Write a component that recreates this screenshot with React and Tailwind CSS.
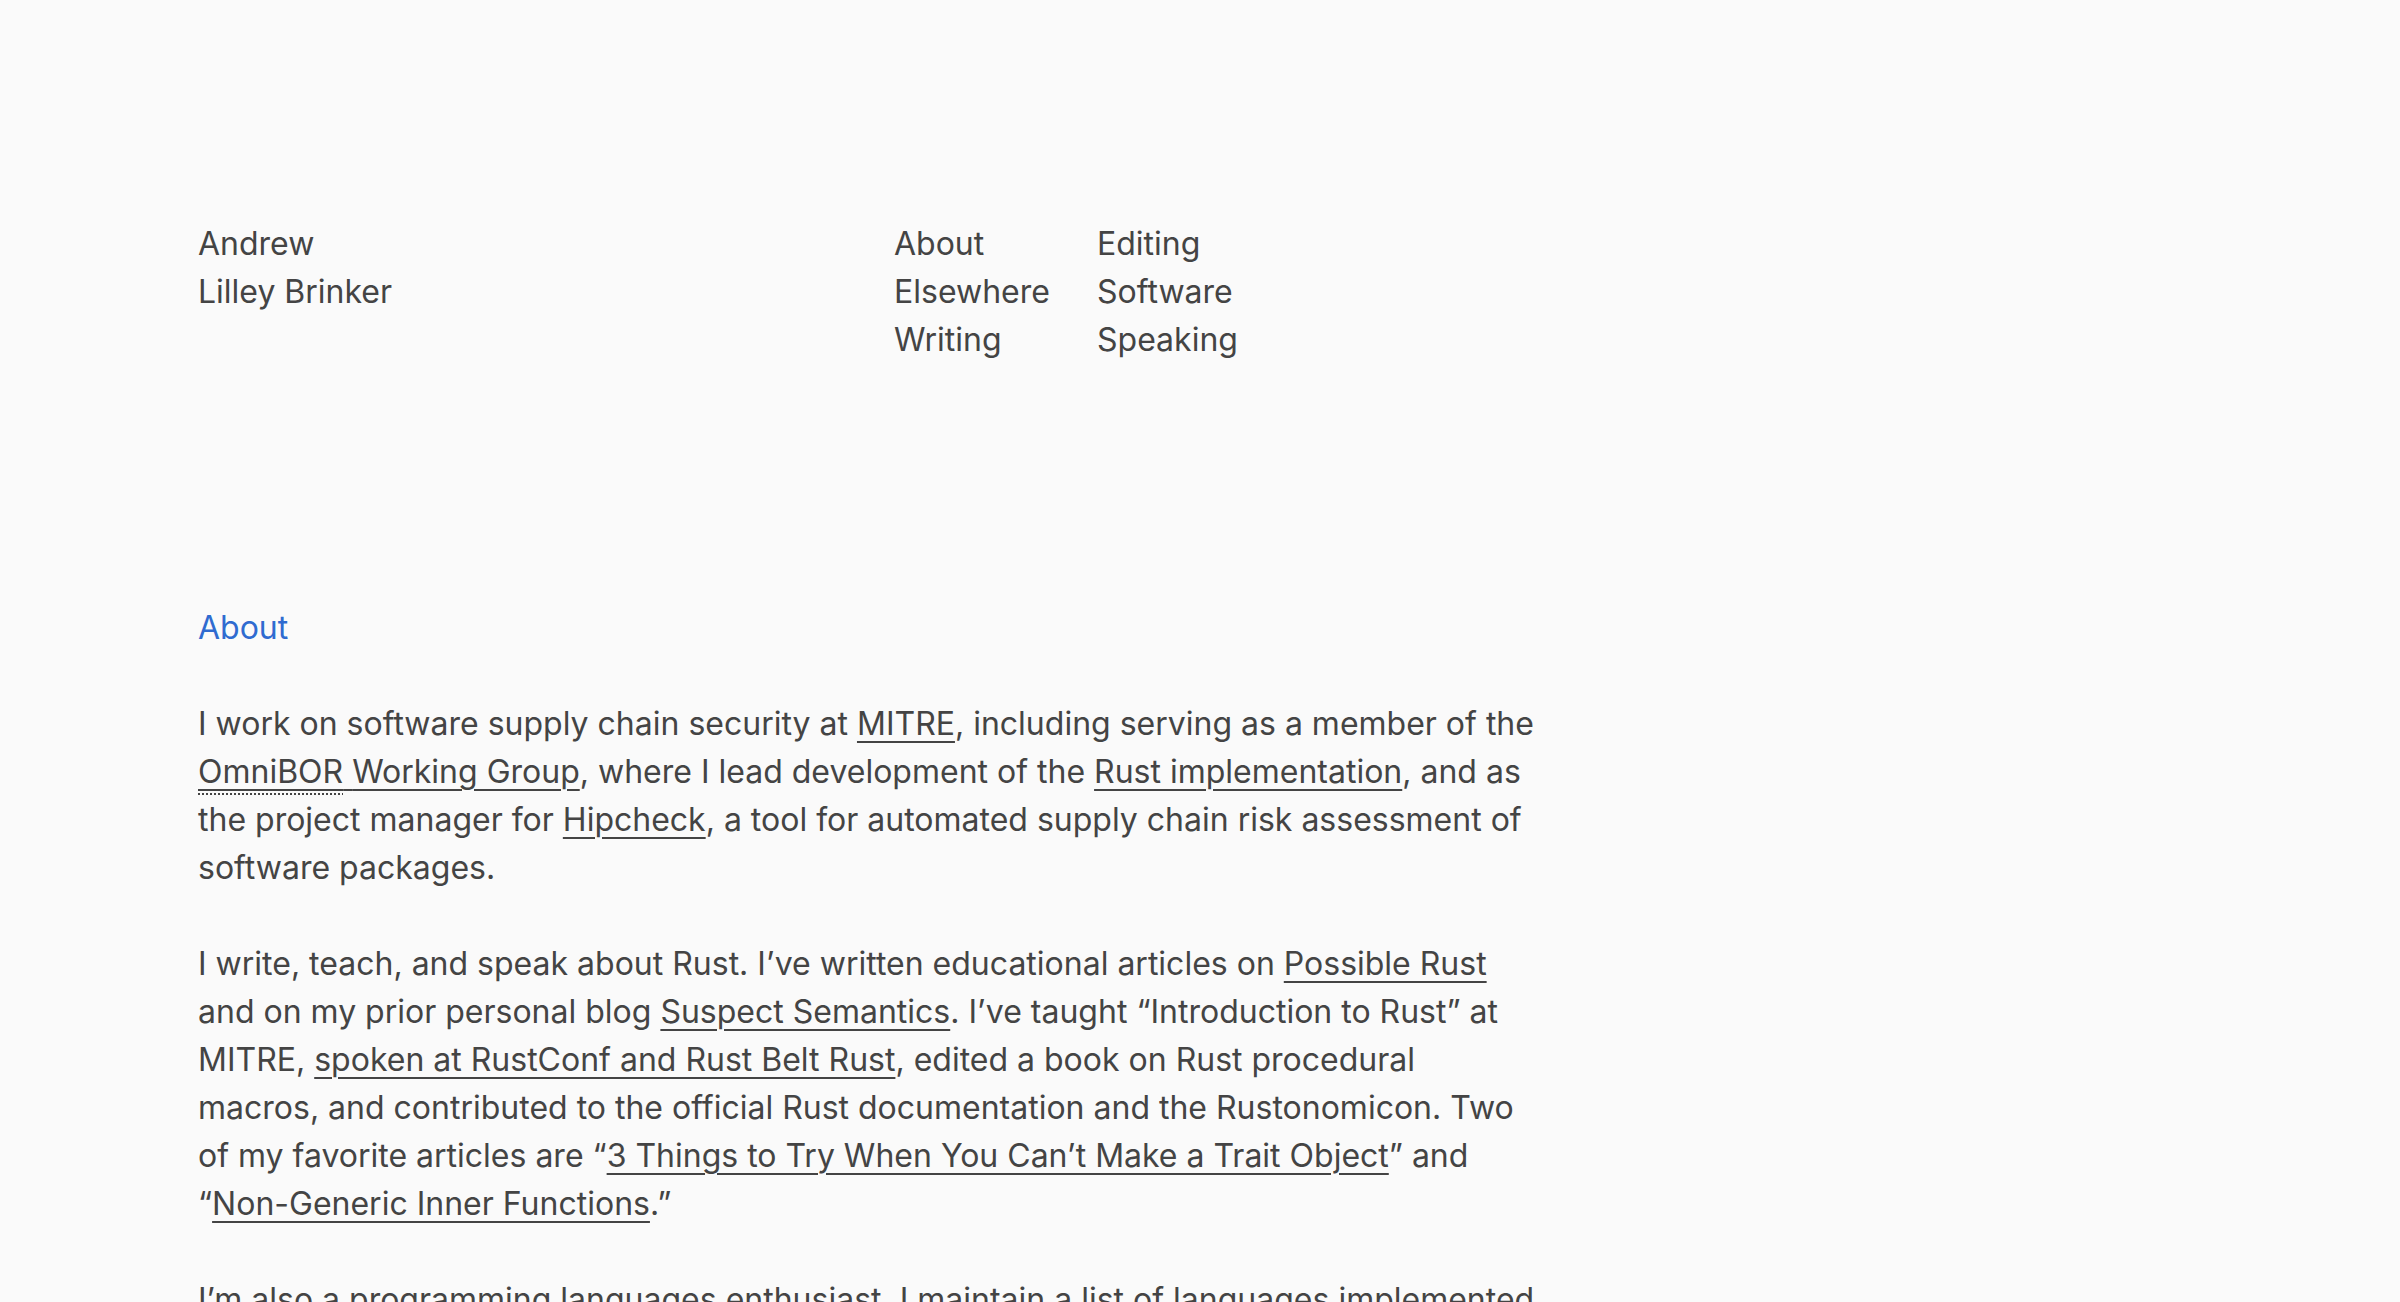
const link = 'underline decoration-[1.5px] underline-offset-[6px] decoration-[#444]'

export default function App() {
  return (
    <div className="min-h-screen bg-[#fafafa] text-[#444] font-['Inter','Noto_Sans',sans-serif] text-[32px] leading-[48px]">
      <div className="pl-[198px] pt-[220px] w-[1538px]">
        <header className="flex">
          <div className="w-[696px]">
            <div>Andrew</div>
            <div>Lilley Brinker</div>
          </div>
          <nav className="grid grid-cols-[203px_auto] grid-rows-3 grid-flow-col">
            <a href="#about">About</a>
            <a href="#elsewhere">Elsewhere</a>
            <a href="#writing">Writing</a>
            <a href="#editing">Editing</a>
            <a href="#software">Software</a>
            <a href="#speaking">Speaking</a>
          </nav>
        </header>

        <main className="mt-[240px]">
          <h2 id="about" className="text-[#2f6bd0] mb-[48px]">About</h2>

          <p className="mb-[48px]">
            I work on software supply chain security at <a className={link} href="#">MITRE</a>, including serving as a member of the{' '}
            <a className={link} href="#">
              <abbr title="Open Manifest of Build Input Relationships" className="no-underline">
                <span className="underline decoration-dotted decoration-2 underline-offset-[10px]">OmniBOR</span>
              </abbr>{' '}
              Working Group
            </a>, where I lead development of the <a className={link} href="#">Rust implementation</a>, and as
            the project manager for <a className={link} href="#">Hipcheck</a>, a tool for automated supply chain risk assessment of
            software packages.
          </p>

          <p className="mb-[48px]">
            I write, teach, and speak about Rust. I’ve written educational articles on <a className={link} href="#">Possible Rust</a>{' '}
            and on my prior personal blog <a className={link} href="#">Suspect Semantics</a>. I’ve taught “Introduction to Rust” at
            MITRE, <a className={link} href="#">spoken at RustConf and Rust Belt Rust</a>, edited a book on Rust procedural
            macros, and contributed to the official Rust documentation and the Rustonomicon. Two
            of my favorite articles are “<a className={link} href="#">3 Things to Try When You Can’t Make a Trait Object</a>” and
            “<a className={link} href="#">Non-Generic Inner Functions</a>.”
          </p>

          <p className="mb-[48px]">
            I’m also a programming languages enthusiast. I maintain a list of languages implemented
            in Rust, and I enjoy reading about type systems, compilers, and the design of programming languages.
          </p>
        </main>
      </div>
    </div>
  )
}
